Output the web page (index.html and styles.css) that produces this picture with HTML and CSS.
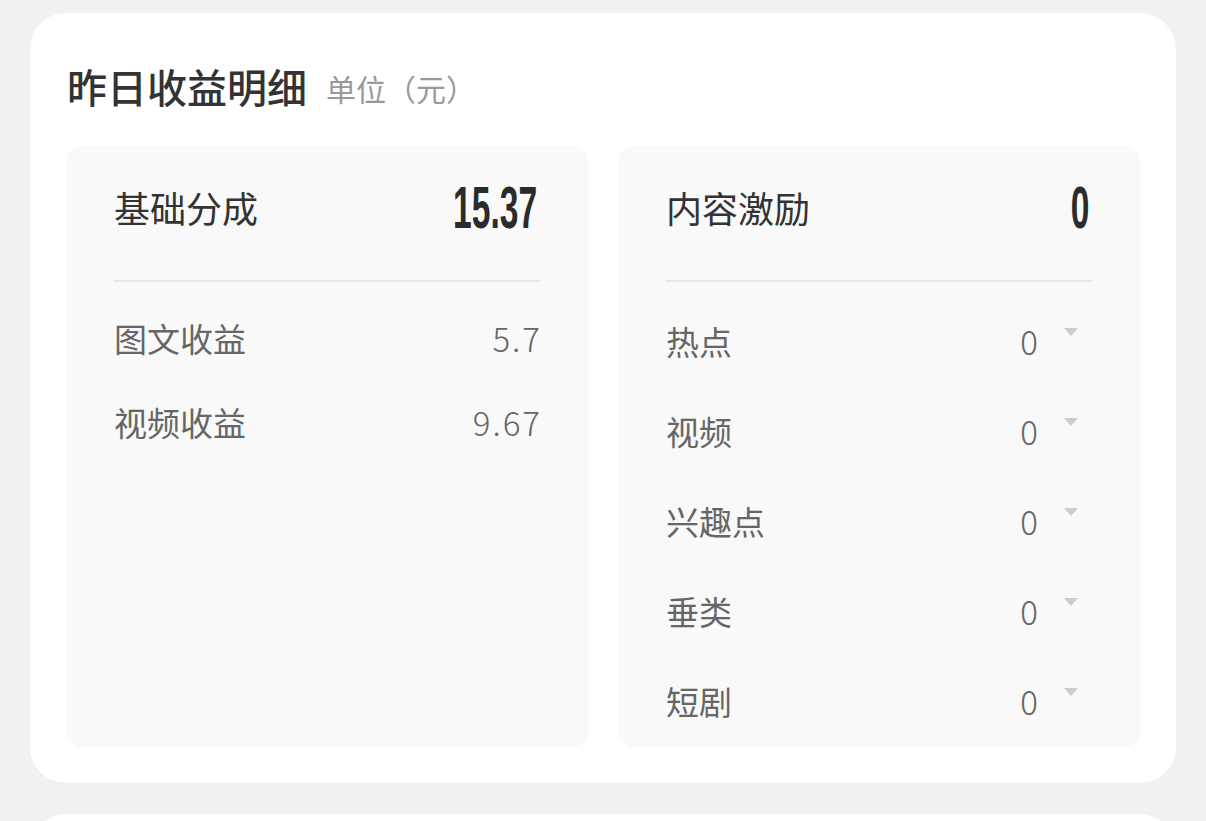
FILE: index.html
```html
<!DOCTYPE html>
<html lang="zh-CN">
<head>
  <meta charset="UTF-8">
  <title>昨日收益明细</title>
  <link rel="stylesheet" href="styles.css">
</head>
<body>
  <div class="page">
    <div class="card">
      <div class="title">昨日收益明细 <span class="unit">单位（元）</span></div>
      <div class="grid">
        <div class="box">
          <div class="head">
            <span class="head-label">基础分成</span>
            <span class="big">15.37</span>
          </div>
          <div class="line"></div>
          <div class="row short">
            <span>图文收益</span>
            <span class="val">5.7</span>
          </div>
          <div class="row short">
            <span>视频收益</span>
            <span class="val">9.67</span>
          </div>
        </div>
        <div class="box">
          <div class="head">
            <span class="head-label">内容激励</span>
            <span class="big">0</span>
          </div>
          <div class="line"></div>
          <div class="row">
            <span>热点</span>
            <span class="right"><span class="val">0</span><i class="arrow"></i></span>
          </div>
          <div class="row">
            <span>视频</span>
            <span class="right"><span class="val">0</span><i class="arrow"></i></span>
          </div>
          <div class="row">
            <span>兴趣点</span>
            <span class="right"><span class="val">0</span><i class="arrow"></i></span>
          </div>
          <div class="row">
            <span>垂类</span>
            <span class="right"><span class="val">0</span><i class="arrow"></i></span>
          </div>
          <div class="row">
            <span>短剧</span>
            <span class="right"><span class="val">0</span><i class="arrow"></i></span>
          </div>
        </div>
      </div>
    </div>
    <div class="card next"></div>
  </div>
</body>
</html>
```

FILE: styles.css
```css
body {
  margin: 0;
  background: #f1f1f3;
  font-family: "Noto Sans CJK SC", "Noto Sans", sans-serif;
  color: #333;
}
.page {
  padding: 13px 30px 0;
}
.card {
  background: #fff;
  border-radius: 36px;
  padding: 45px 36px 36px 37px;
}
.card.next {
  margin-top: 31px;
  height: 200px;
  padding: 0;
}
.title {
  font-size: 40px;
  font-weight: 500;
  line-height: 56px;
  color: #333;
}
.unit {
  font-size: 30px;
  font-weight: 400;
  color: #999;
  margin-left: 10px;
  vertical-align: 2px;
}
.grid {
  margin-top: 30px;
  display: grid;
  grid-template-columns: 1fr 1fr;
  gap: 30px;
  margin-left: -1px;
}
.box {
  background: #f9f9f9;
  border-radius: 16px;
  padding: 30px 48px 1px 48px;
}
.head {
  display: flex;
  justify-content: space-between;
  align-items: center;
  height: 62px;
  margin-bottom: 42px;
}
.head-label {
  font-size: 36px;
  color: #333;
}
.big {
  font-family: "Liberation Sans Narrow", "Liberation Sans", sans-serif;
  font-weight: 700;
  font-size: 60px;
  color: #2b2b2b;
  display: inline-block;
  transform: scaleX(0.56);
  transform-origin: right center;
  margin-right: 3px;
}
.line {
  height: 2px;
  background: #e6e6e6;
  margin-bottom: 14px;
}
.row {
  display: flex;
  justify-content: space-between;
  align-items: center;
  height: 90px;
  font-size: 33px;
  color: #666;
}
.row.short {
  height: 84px;
}
.row.short:first-of-type {
  margin-top: 2px;
}
.val {
  font-size: 33px;
  font-weight: 300;
  letter-spacing: 2px;
  margin-right: -2px;
  color: #666;
}
.right {
  display: flex;
  align-items: center;
}
.arrow {
  width: 0;
  height: 0;
  border-left: 7px solid transparent;
  border-right: 7px solid transparent;
  border-top: 8px solid #ccc;
  margin-left: 26px;
  margin-right: 14px;
  margin-bottom: 18px;
}
```
